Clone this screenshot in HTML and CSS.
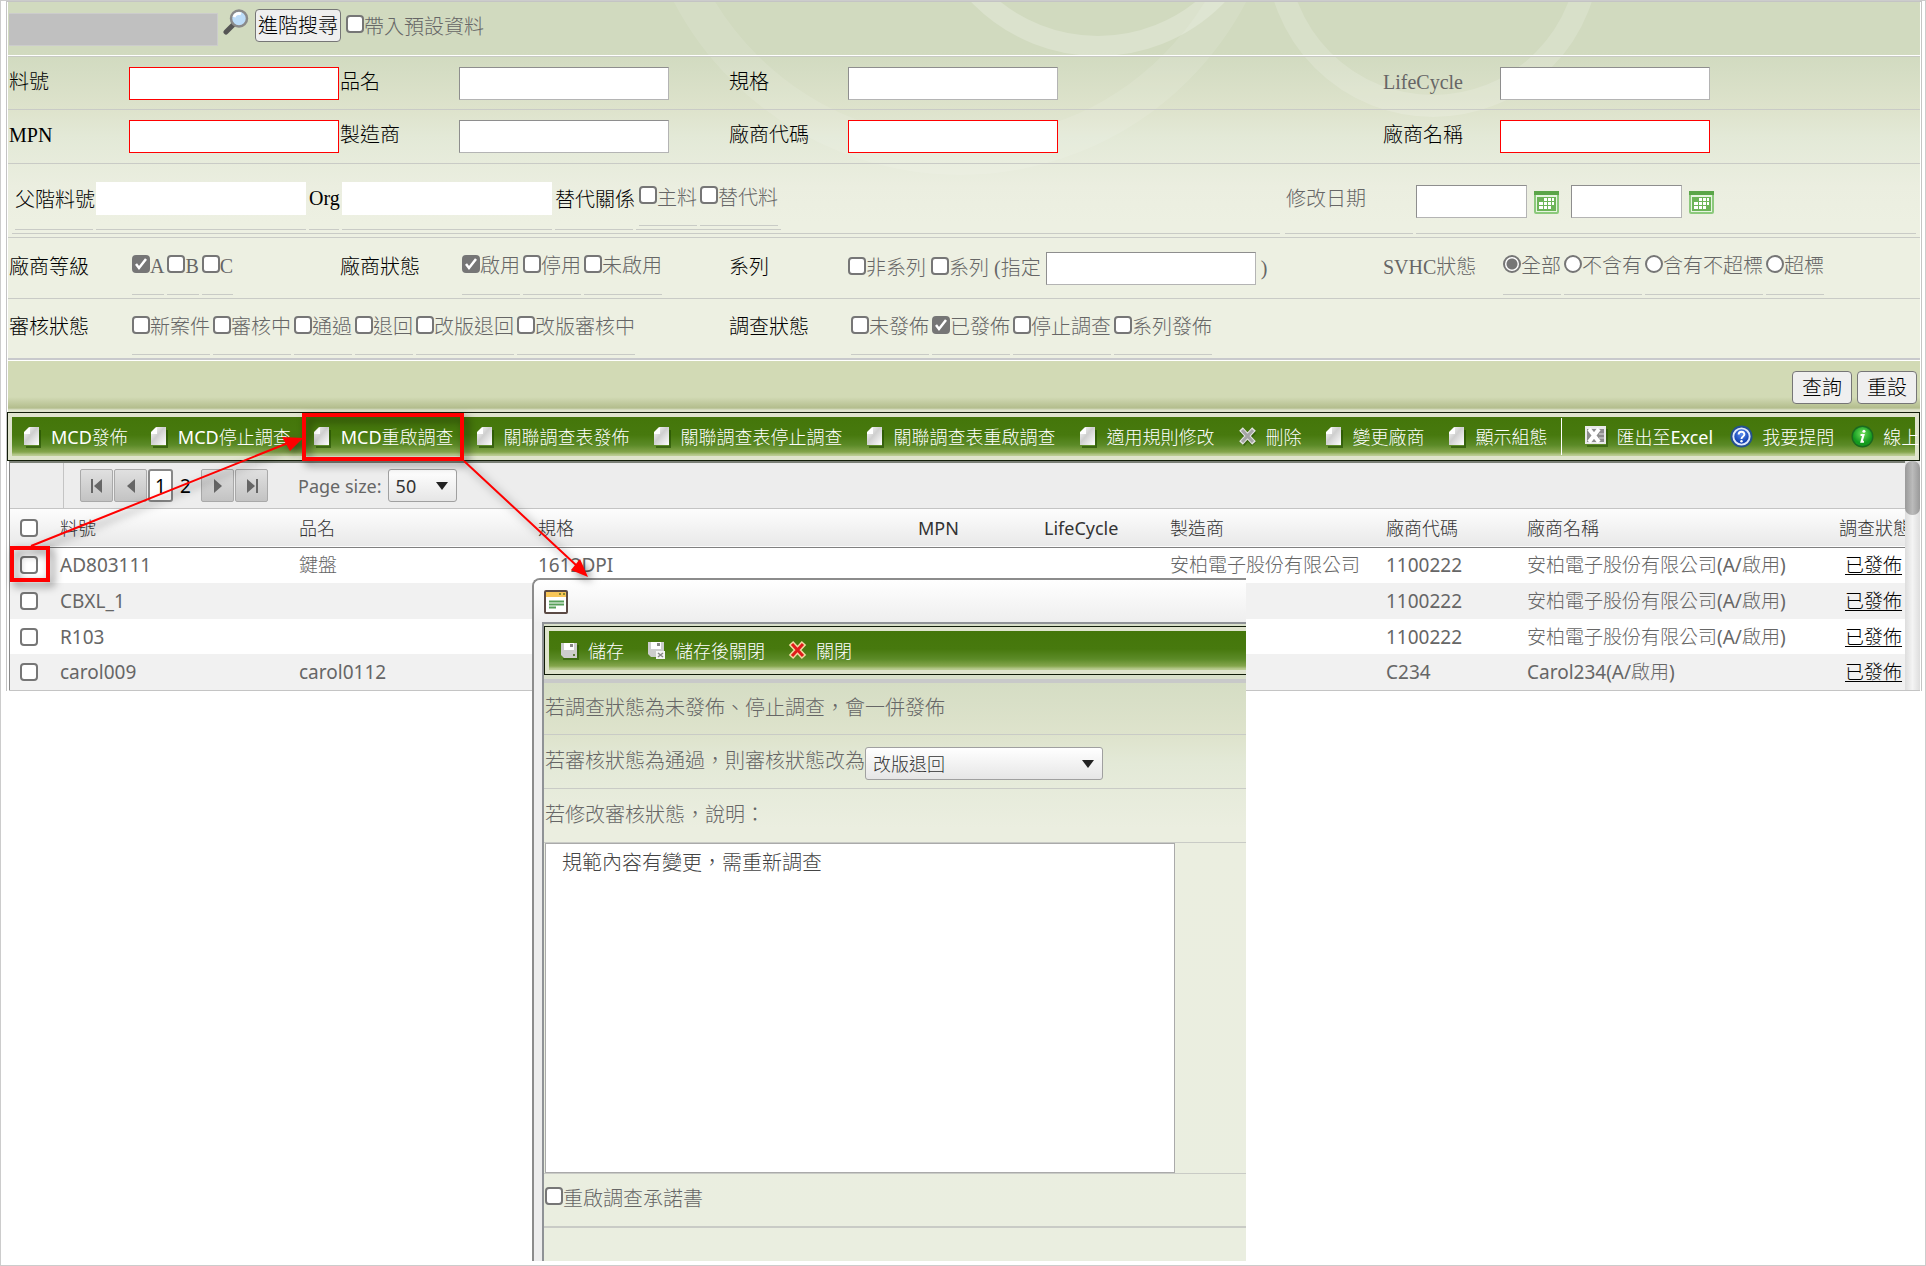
FILE: index.html
```html
<!DOCTYPE html>
<html lang="zh-Hant">
<head>
<meta charset="utf-8">
<title>MCD</title>
<link rel="stylesheet" href="styles.css">
</head>
<body>
<svg class="defs" width="0" height="0" aria-hidden="true">
  <defs>
    <linearGradient id="paper" x1="0" y1="0" x2="1" y2="1"><stop offset="0" stop-color="#fff"/><stop offset=".45" stop-color="#cfcfcf"/><stop offset="1" stop-color="#fff"/></linearGradient>
    <radialGradient id="blue" cx=".5" cy=".35"><stop offset="0" stop-color="#5b8df0"/><stop offset="1" stop-color="#1443b4"/></radialGradient>
    <radialGradient id="green" cx=".5" cy=".35"><stop offset="0" stop-color="#6fe05c"/><stop offset="1" stop-color="#139a1f"/></radialGradient>
    <symbol id="doc" viewBox="0 0 20 22"><path d="M3 21h14V4" fill="none" stroke="#1f4a00" stroke-opacity=".6" stroke-width="2"/><path d="M6 1h10v18H1V7h4V2z" fill="url(#paper)"/><path d="M1 8V6l4-4h2v6z" fill="#fff"/></symbol>
    <symbol id="cross" viewBox="0 0 20 22"><path d="M4 5l12 13M16 5L4 18" stroke="#1f4a00" stroke-opacity=".5" stroke-width="6"/><path d="M3 3l13 14M16 3L3 17" stroke="#e4e4e4" stroke-width="5"/><path d="M4 4l11 12M15 4L4 16" stroke="#a5a5a5" stroke-width="3"/></symbol>
    <symbol id="redcross" viewBox="0 0 20 22"><path d="M3 3l13 14M16 3L3 17" stroke="#f3d9a0" stroke-width="6"/><path d="M4 4l11 12M15 4L4 16" stroke="#e01b1b" stroke-width="3"/></symbol>
    <symbol id="floppy" viewBox="0 0 20 22"><path d="M3 19h15V5" fill="none" stroke="#1f4a00" stroke-opacity=".5" stroke-width="2"/><path d="M1 3h16v15H4l-3-3z" fill="#cdcdcd"/><path d="M4 3h10v7H4z" fill="#fff"/><path d="M10 4h3v3h-3z" fill="#888"/><path d="M13 14h2v2h-2z" fill="#5c7a3a"/></symbol>
    <symbol id="floppyx" viewBox="0 0 20 22"><path d="M1 2h16v15H4l-3-3z" fill="#cdcdcd"/><path d="M4 2h10v7H4z" fill="#fff"/><path d="M10 3h3v3h-3z" fill="#888"/><path d="M9 11h9v8H9z" fill="#f4f4f4"/><path d="M11 13l5 4M16 13l-5 4" stroke="#888" stroke-width="1.500"/></symbol>
    <symbol id="excel" viewBox="0 0 23 23"><path d="M2 21h20V4" fill="none" stroke="#1f4a00" stroke-opacity=".5" stroke-width="2"/><path d="M0 1h21v18H0z" fill="#e9e9e9"/><path d="M2 4h17v13H2z" fill="#8d8d8d"/><path d="M4 4l10 13M14 4L4 17" stroke="#fff" stroke-width="4"/><path d="M14 9h5M14 13h5" stroke="#ddd"/></symbol>
    <symbol id="help" viewBox="0 0 24 24"><circle cx="12" cy="12" r="11.500" fill="#24508f"/><circle cx="12" cy="12" r="8.500" fill="url(#blue)" stroke="#dfe8fb" stroke-width="2"/><path d="M9 10c0-4 6-4 6 0 0 2-3 2-3 4.500" fill="none" stroke="#fff" stroke-width="2"/><circle cx="12" cy="17" r="1.300" fill="#fff"/></symbol>
    <symbol id="info" viewBox="0 0 24 24"><circle cx="12" cy="12" r="11.500" fill="#1b6a1e"/><circle cx="12" cy="12" r="10" fill="url(#green)"/><circle cx="13.500" cy="6.500" r="1.600" fill="#fff"/><path d="M10 10.500h3l-2 7h2.500" fill="none" stroke="#fff" stroke-width="2.200"/></symbol>
    <symbol id="cal" viewBox="0 0 25 23"><rect x="1" y="1" width="23" height="21" rx="1" fill="#e6f4e0" stroke="#8cc97c" stroke-width="2"/><path d="M0 0h25v4H0z" fill="#5aa548"/><path d="M3 6h19v14H3z" fill="#6cb458"/><path d="M10 7h3v3h-3zM14 7h3v3h-3zM18 7h2v3h-2zM5 11h4v3H5zM10 11h3v3h-3zM14 11h3v3h-3zM18 11h2v3h-2zM5 15h4v3H5zM10 15h3v3h-3zM14 15h3v3h-3z" fill="#fff"/></symbol>
  </defs>
</svg>
<div class="frame">
<main class="app">
  <form class="search" onsubmit="return false">
    <svg class="swirl" viewBox="0 0 1912 240" preserveAspectRatio="xMidYMin slice" aria-hidden="true">
      <g fill="none" stroke="#fff"><circle cx="1090" cy="-122" r="166" stroke-width="20" stroke-opacity=".22"/><circle cx="1425" cy="-52" r="156" stroke-width="22" stroke-opacity=".16"/><circle cx="952" cy="-150" r="305" stroke-width="36" stroke-opacity=".1"/></g>
    </svg>
    <div class="topbar">
      <div class="blank"></div>
      <svg class="magnifier" viewBox="0 0 26 26" aria-hidden="true"><path d="M3 23l8-8" stroke="#555" stroke-width="5" stroke-linecap="round"/><circle cx="16" cy="9.500" r="8" fill="#bcdcf8" stroke="#8a8a8a" stroke-width="2.500"/><path d="M11 8a5 5 0 0 1 7-3" stroke="#fff" stroke-width="3" fill="none"/></svg>
      <button class="btn wide" type="button">進階搜尋</button>
      <label class="opt"><input type="checkbox">帶入預設資料</label>
    </div>
    <div class="row r1">
      <label for="f1">料號</label><input id="f1" class="box req" type="text">
      <label for="f2">品名</label><input id="f2" class="box" type="text">
      <label for="f3">規格</label><input id="f3" class="box" type="text">
      <label for="f4" class="soft">LifeCycle</label><input id="f4" class="box" type="text">
    </div>
    <div class="row r1">
      <label for="f5">MPN</label><input id="f5" class="box req" type="text">
      <label for="f6">製造商</label><input id="f6" class="box" type="text">
      <label for="f7">廠商代碼</label><input id="f7" class="box req" type="text">
      <label for="f8">廠商名稱</label><input id="f8" class="box req" type="text">
    </div>
    <div class="parent">
      <div class="parent-left">
        <label class="cell w4" for="f9">父階料號</label>
        <span class="cell"><input id="f9" class="box plain" type="text"></span>
        <label class="cell w-org" for="f10">Org</label>
        <span class="cell"><input id="f10" class="box plain" type="text"></span>
        <span class="cell w4">替代關係</span>
        <span class="cell alt"><label class="opt line"><input type="checkbox">主料</label><label class="opt line"><input type="checkbox">替代料</label></span>
      </div>
      <label class="date-label soft" for="f11">修改日期</label>
      <div class="date">
        <input id="f11" class="box short" type="text"><svg class="cal"><use href="#cal"/></svg>
        <input class="box short" type="text" aria-label="修改日期迄"><svg class="cal"><use href="#cal"/></svg>
      </div>
    </div>
    <div class="row r2">
      <span>廠商等級</span>
      <div class="group"><label class="opt line"><input type="checkbox" checked>A</label><label class="opt line"><input type="checkbox">B</label><label class="opt line"><input type="checkbox">C</label></div>
      <span>廠商狀態</span>
      <div class="group"><label class="opt line"><input type="checkbox" checked>啟用</label><label class="opt line"><input type="checkbox">停用</label><label class="opt line"><input type="checkbox">未啟用</label></div>
      <span>系列</span>
      <div class="series"><label class="opt"><input type="checkbox">非系列</label><label class="opt"><input type="checkbox">系列 (指定</label><input class="box" type="text" aria-label="指定系列"><span class="soft">)</span></div>
      <span class="soft">SVHC狀態</span>
      <div class="group"><label class="opt line"><input type="radio" name="svhc" checked>全部</label><label class="opt line"><input type="radio" name="svhc">不含有</label><label class="opt line"><input type="radio" name="svhc">含有不超標</label><label class="opt line"><input type="radio" name="svhc">超標</label></div>
    </div>
    <div class="row r3">
      <span>審核狀態</span>
      <div class="group span3"><label class="opt line"><input type="checkbox">新案件</label><label class="opt line"><input type="checkbox">審核中</label><label class="opt line"><input type="checkbox">通過</label><label class="opt line"><input type="checkbox">退回</label><label class="opt line"><input type="checkbox">改版退回</label><label class="opt line"><input type="checkbox">改版審核中</label></div>
      <span>調查狀態</span>
      <div class="group span3"><label class="opt line"><input type="checkbox">未發佈</label><label class="opt line"><input type="checkbox" checked>已發佈</label><label class="opt line"><input type="checkbox">停止調查</label><label class="opt line"><input type="checkbox">系列發佈</label></div>
    </div>
    <div class="actions"><button class="btn" type="submit">查詢</button><button class="btn" type="reset">重設</button></div>
  </form>

  <div class="toolbar"><nav class="tools">
    <button class="mcd" type="button"><svg><use href="#doc"/></svg>MCD發佈</button>
    <button class="mcd" type="button"><svg><use href="#doc"/></svg>MCD停止調查</button>
    <button class="mcd" type="button"><svg><use href="#doc"/></svg>MCD重啟調查</button>
    <button type="button"><svg><use href="#doc"/></svg>關聯調查表發佈</button>
    <button type="button"><svg><use href="#doc"/></svg>關聯調查表停止調查</button>
    <button type="button"><svg><use href="#doc"/></svg>關聯調查表重啟調查</button>
    <button type="button"><svg><use href="#doc"/></svg>適用規則修改</button>
    <button type="button"><svg><use href="#cross"/></svg>刪除</button>
    <button type="button"><svg><use href="#doc"/></svg>變更廠商</button>
    <button type="button"><svg><use href="#doc"/></svg>顯示組態</button>
    <span class="sep"></span>
    <button class="big" type="button"><svg><use href="#excel"/></svg>匯出至Excel</button>
    <button class="big" type="button"><svg><use href="#help"/></svg>我要提問</button>
    <button class="big" type="button"><svg><use href="#info"/></svg>線上</button>
  </nav></div>

  <section class="grid">
    <div class="grid-main">
      <div class="pager">
        <span class="pager-side"></span>
        <button class="pg" type="button" aria-label="第一頁"><svg viewBox="0 0 16 16"><path d="M3 1v14" stroke="#666" stroke-width="2"/><path d="M13 1v14L5 8z" fill="#666"/></svg></button>
        <button class="pg" type="button" aria-label="上一頁"><svg viewBox="0 0 16 16"><path d="M12 1v14L4 8z" fill="#666"/></svg></button>
        <button class="num on" type="button">1</button><button class="num" type="button">2</button>
        <button class="pg" type="button" aria-label="下一頁"><svg viewBox="0 0 16 16"><path d="M4 1v14l8-7z" fill="#666"/></svg></button>
        <button class="pg" type="button" aria-label="最後頁"><svg viewBox="0 0 16 16"><path d="M13 1v14" stroke="#666" stroke-width="2"/><path d="M3 1v14l8-7z" fill="#666"/></svg></button>
        <label class="size" for="ps">Page size:</label>
        <select id="ps" class="pick"><option>50</option></select>
      </div>
      <table>
        <colgroup><col class="c0"><col class="c1"><col class="c1"><col class="c3"><col class="c4"><col class="c4"><col class="c6"><col class="c7"><col><col class="c9"></colgroup>
        <thead><tr><th><input type="checkbox" aria-label="全選"></th><th>料號</th><th>品名</th><th>規格</th><th>MPN</th><th>LifeCycle</th><th>製造商</th><th>廠商代碼</th><th>廠商名稱</th><th>調查狀態</th></tr></thead>
        <tbody>
          <tr><td><input type="checkbox" aria-label="AD803111"></td><td>AD803111</td><td>鍵盤</td><td>1612DPI</td><td></td><td></td><td>安柏電子股份有限公司</td><td>1100222</td><td>安柏電子股份有限公司(A/啟用)</td><td><a href="#">已發佈</a></td></tr>
          <tr><td><input type="checkbox" aria-label="CBXL_1"></td><td>CBXL_1</td><td></td><td></td><td></td><td></td><td></td><td>1100222</td><td>安柏電子股份有限公司(A/啟用)</td><td><a href="#">已發佈</a></td></tr>
          <tr><td><input type="checkbox" aria-label="R103"></td><td>R103</td><td></td><td></td><td></td><td></td><td></td><td>1100222</td><td>安柏電子股份有限公司(A/啟用)</td><td><a href="#">已發佈</a></td></tr>
          <tr><td><input type="checkbox" aria-label="carol009"></td><td>carol009</td><td>carol0112</td><td></td><td></td><td></td><td></td><td>C234</td><td>Carol234(A/啟用)</td><td><a href="#">已發佈</a></td></tr>
        </tbody>
      </table>
    </div>
    <div class="scroll"><span></span></div>
  </section>
</main>

<section class="popup">
  <header><svg viewBox="0 0 24 24" aria-hidden="true"><rect x="1" y="1" width="22" height="22" rx="1" fill="#fff" stroke="#5b4a44" stroke-width="2"/><path d="M2 2h20v5H2z" fill="#f8c557"/><path d="M15 3h2v2h-2zM19 3h2v2h-2z" fill="#8a8a30"/><path d="M5 11.500h15M5 14.500h15M5 17.500h7" stroke="#58a05a" stroke-width="1.800"/></svg></header>
  <form class="pane" onsubmit="return false">
    <div class="toolbar"><nav class="tools">
      <button type="button"><svg><use href="#floppy"/></svg>儲存</button>
      <button type="button"><svg><use href="#floppyx"/></svg>儲存後關閉</button>
      <button type="button"><svg><use href="#redcross"/></svg>關閉</button>
    </nav></div>
    <div class="fields">
      <p>若調查狀態為未發佈、停止調查，會一併發佈</p>
      <p><label for="st">若審核狀態為通過，則審核狀態改為</label><select id="st" class="pick long"><option>改版退回</option></select></p>
      <p><label for="why">若修改審核狀態，說明：</label></p>
      <div class="note"><textarea id="why">規範內容有變更，需重新調查</textarea></div>
      <p class="last"><label class="opt"><input type="checkbox">重啟調查承諾書</label></p>
    </div>
  </form>
</section>

<svg class="marks" width="620" height="600" aria-hidden="true">
  <g fill="none" stroke="#f00"><rect x="304" y="415" width="158" height="44" stroke-width="4"/><rect x="12" y="548" width="36" height="32" stroke-width="4"/><path d="M31 546L288 443M464 461L577 566" stroke-width="2"/></g>
  <path d="M303 438L282 437L290 451zM588 577L571 570L580 559z" fill="#f00"/>
</svg>
</div>
</body>
</html>
```
FILE: styles.css
```css
* { box-sizing: border-box; }
body { margin: 0; background: #fff; color: #000; font-size: 20px; font-family: "Liberation Serif", "Noto Sans CJK TC Light", "Noto Sans CJK TC", serif; }
input, button, select, textarea { font: inherit; margin: 0; }
button { cursor: pointer; }
.defs { position: absolute; }
.frame { position: relative; min-height: 100vh; border: 1px solid #ccc; }
.app { margin: 0 3px 0 5px; padding: 0 1px; border: 1px solid #c4c4c4; border-bottom: 0; }
.soft, .opt { color: #666; }

.search { position: relative; isolation: isolate; background: linear-gradient(#d1dabf 0, #d1dabf 50px, #d5ddc4 70px, #dee3cc 108px, #e3e9d7 135px, #ebeee0 185px, #edf0e2 220px); }
.swirl { position: absolute; z-index: -1; top: 0; left: 0; width: 100%; height: 235px; }
.topbar { display: flex; align-items: flex-start; height: 55px; padding: 7px 1px 0; border-bottom: 1px solid #c8cac4; box-shadow: inset 0 -1px #fff; }
.blank { width: 209px; height: 33px; margin: 4px 5px 0 0; background: #c0c0c0; border: 1px solid #ccc; border-left: 0; }
.magnifier { width: 26px; height: 26px; margin-right: 6px; }
.btn { height: 33px; width: 60px; padding: 0; background: #efefef; border: 1px solid #767676; border-radius: 4px; line-height: 28px; white-space: nowrap; }
.btn.wide { width: 86px; margin-right: 5px; }
.topbar .opt { height: 33px; }

.opt { display: flex; align-items: center; white-space: nowrap; }
input[type=checkbox], input[type=radio] { appearance: none; flex: none; width: 18px; height: 18px; background: #fff; border: 2px solid #767676; border-radius: 4px; }
.opt input[type=checkbox], .opt input[type=radio] { margin-bottom: 4px; }
input[type=checkbox]:checked { background: #767676 url("data:image/svg+xml,%3Csvg xmlns='http://www.w3.org/2000/svg' viewBox='0 0 14 14'%3E%3Cpath d='M2 7l3 4 7-9' fill='none' stroke='white' stroke-width='2.500'/%3E%3C/svg%3E"); }
input[type=radio] { border-radius: 50%; }
input[type=radio]:checked { background: radial-gradient(#767676 5px, #fff 6px); }

.row { display: grid; grid-template-columns: 121px 211px 119px 270px 119px 535px 117px 1fr; align-items: center; border-bottom: 1px solid #c9cbc6; line-height: 24px; white-space: nowrap; }
.row > :first-child { padding-left: 1px; }
.row > label, .row > span { padding-bottom: 3px; }
.r1 { height: 54px; }
.r1:nth-of-type(2) { height: 53px; }
.r2 { height: 61px; }
.r3 { height: 61px; border-bottom: 2px solid #c8c9cc; }
.box { width: 210px; height: 33px; padding: 0 6px; background: #fff; border: 1px solid #b4b4b4; border-top-color: #8e8e8e; border-left-color: #8e8e8e; }
.box.req { border-color: #f00; }
.box.plain { border-color: #fff; }
.box.short { width: 111px; }
.group { display: flex; gap: 3px; align-self: stretch; padding: 0 0 3px 3px; }
.line { border-bottom: 1px solid #c9cbc6; }
.span3 { grid-column: span 3; }
.series { display: flex; align-items: center; gap: 5px; }

.parent { display: flex; height: 74px; padding: 0 4px 3px; border-bottom: 1px solid #c9cbc6; white-space: nowrap; }
.parent > * { border-bottom: 1px solid #c9cbc6; }
.parent-left { display: flex; gap: 3px; width: 1268px; padding: 0 3px 3px; margin-right: 5px; }
.cell { display: flex; align-items: center; padding-top: 4px; border-bottom: 1px solid #c9cbc6; }
.w4 { width: 78px; }
.w-org { width: 30px; }
.alt { gap: 3px; align-items: stretch; padding: 4px 3px 3px; }
.date-label { display: flex; align-items: center; width: 128px; margin-right: 3px; padding: 0 0 2px 1px; }
.date { display: flex; flex: 1; align-items: center; padding-top: 6px; }
.cal { width: 25px; height: 23px; margin: 2px 12px 0 7px; }

.actions { display: flex; justify-content: flex-end; gap: 5px; height: 52px; padding: 10px 3px 0; border-top: 1px solid #fff; background: linear-gradient(#d2dab5 0, #d2dab5 36px, #b3bd8d 47px, #dfe4cd 49px, #dfe4cd 100%); }

.toolbar { margin-left: -1px; padding: 4px; border: 1px solid #111c08; background: #dfe4cd; overflow: hidden; }
.tools { display: flex; align-items: center; gap: 23px; height: 39px; padding-left: 11px; background: linear-gradient(#44760a 0, #47790e 18px, #5b8a27 28px, #84a54c 35px, #b9cb91 38px); font: 18px "Noto Sans", "Noto Sans CJK TC Light", "Noto Sans CJK TC", sans-serif; }
.tools button { display: flex; align-items: center; flex: none; gap: 8px; padding: 0; background: none; border: 0; color: #fff; line-height: 24px; white-space: nowrap; }
.tools svg { width: 20px; height: 22px; }
.tools .mcd { margin-right: -1px; }
.tools .big { gap: 9px; margin-right: -6px; }
.tools .big svg { width: 23px; height: 23px; }
.sep { flex: none; width: 1px; height: 37px; margin-left: -10px; background: #fff; }

.grid { display: flex; margin-left: 1px; border-bottom: 1px solid #c4c4c4; font: 19px "Noto Sans", "Noto Sans CJK TC Light", "Noto Sans CJK TC", sans-serif; color: #666; }
.grid-main { flex: 1; min-width: 0; border-left: 1px solid #888; border-top: 2px solid #7a7f76; }
.pager { display: flex; align-items: center; height: 46px; background: #ededed; border-bottom: 1px solid #c4c4c4; }
.pager-side { align-self: stretch; width: 54px; margin-right: 16px; border-right: 1px solid #c4c4c4; }
.pg { display: flex; align-items: center; justify-content: center; width: 33px; height: 33px; margin-right: 1px; padding: 0; background: linear-gradient(#e0e0e0, #c3c3c3); border: 1px solid #a9a9a9; border-radius: 2px; }
.pg svg { width: 16px; height: 16px; }
.num { width: 25px; height: 33px; padding: 0; background: none; border: 0; line-height: 24px; }
.num.on { background: #fff; border: 2px solid #888; border-radius: 3px; }
.num:not(.on) { margin-right: 3px; }
.size { margin: 0 6px 0 29px; font-size: 18px; }
.pick { appearance: none; width: 69px; height: 33px; padding: 0 7px; border: 1px solid #a0a0a0; border-radius: 3px; color: #333; font: 18px "Noto Sans", "Noto Sans CJK TC Light", "Noto Sans CJK TC", sans-serif; background: url("data:image/svg+xml,%3Csvg xmlns='http://www.w3.org/2000/svg' width='12' height='8'%3E%3Cpath d='M0 0h12L6 8z' fill='%23222'/%3E%3C/svg%3E") no-repeat right 8px center, linear-gradient(#fff, #e6e6e6); }
.pick.long { width: 238px; margin-top: 9px; }

table { width: 100%; table-layout: fixed; border-collapse: collapse; }
.c0 { width: 42px; } .c1 { width: 239px; } .c3 { width: 380px; } .c4 { width: 126px; } .c6 { width: 216px; } .c7 { width: 141px; } .c9 { width: 74px; }
th, td { padding: 0 0 0 8px; text-align: left; white-space: nowrap; overflow: hidden; line-height: 24px; }
th { height: 38px; font-size: 18px; font-weight: 400; color: #333; }
thead tr { background: linear-gradient(#fdfdfd, #e9e9e9); border-bottom: 1px solid #808080; }
td { height: 36px; }
tbody tr:nth-child(3) td { height: 35px; }
th input, td input { display: block; margin-left: 2px; }
tbody tr:nth-child(even) { background: #f1f1f1; }
td:last-child { padding-left: 14px; }
td a { color: #000; text-underline-offset: 2px; }
.scroll { width: 15px; background: linear-gradient(90deg, #ddd, #f4f4f4, #ddd); }
.scroll span { display: block; height: 54px; border-radius: 7px; background: linear-gradient(90deg, #999, #bbb, #999); }

.popup { position: absolute; top: 577px; left: 531px; width: 714px; padding: 0 0 0 8px; background: #ededed; border: 2px solid #8c8c8c; border-width: 2px 0 0 2px; border-top-left-radius: 8px; }
.popup header { height: 42px; margin-left: -8px; padding: 10px; background: linear-gradient(#fff, #eee); border-top-left-radius: 6px; }
.popup header svg { width: 24px; height: 24px; }
.pane { padding: 2px 0 0; border: 2px solid #8f9296; border-width: 2px 0 0 2px; background: #d9e0ca; overflow: hidden; }
.pane .toolbar { margin: 0 -6px 0 0; }
.fields { margin-top: 4px; padding-bottom: 33px; border-top: 4px solid #c8c9c9; background: linear-gradient(#d5ddc4 0, #dee3cc 52px, #e3e9d7 80px, #ebeee0 145px, #eaeee0 100%); color: #666; }
.fields p { display: flex; align-items: center; height: 54px; margin: 0; padding: 0 0 5px 1px; border-bottom: 1px solid #c9cbc6; white-space: nowrap; }
.fields p:first-child { height: 52px; }
.fields p.last { border-bottom-width: 2px; }
.note { border-bottom: 1px solid #c9cbc6; padding-left: 1px; }
.note textarea { display: block; width: 630px; height: 330px; padding: 6px 16px; border: 1px solid #aaa; background: #fff; color: #444; line-height: 26px; resize: none; }
.marks { position: absolute; top: -1px; left: -1px; pointer-events: none; filter: drop-shadow(4px 4px 4px rgba(0, 0, 0, .5)); }
```
